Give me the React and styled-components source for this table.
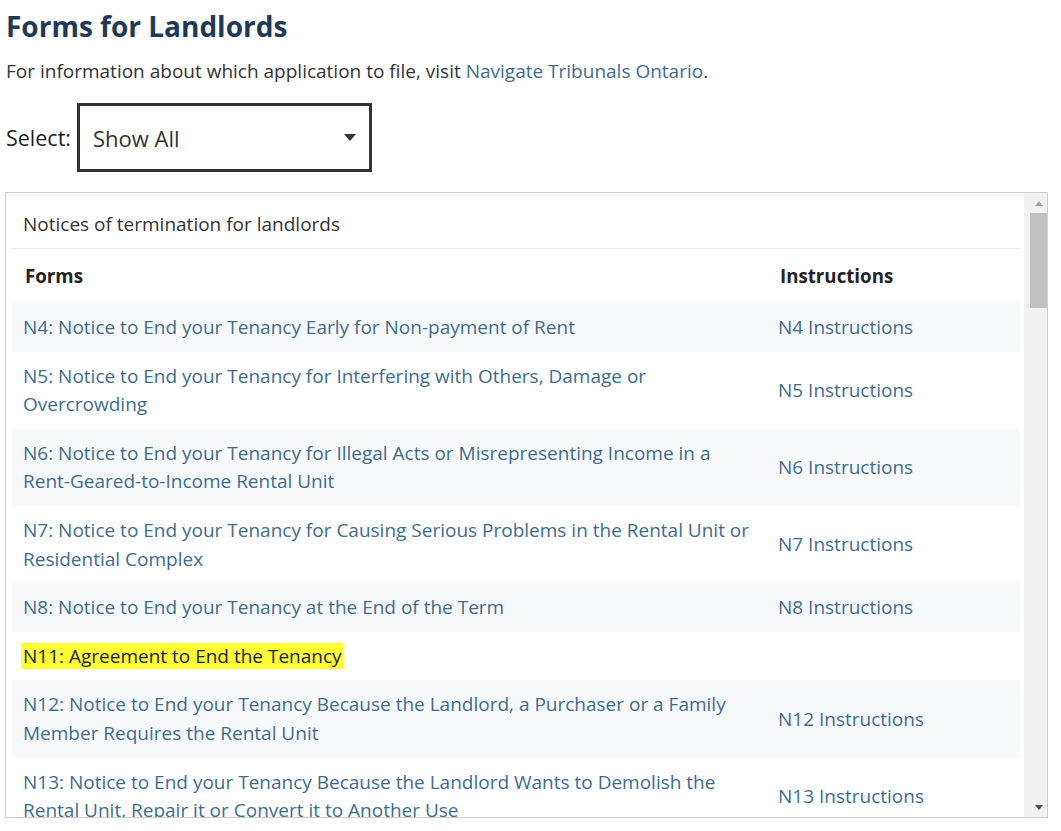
import React from 'react';
import styled, { createGlobalStyle } from 'styled-components';

const GlobalStyle = createGlobalStyle`
    html, body {
        margin: 0;
        padding: 0;
        background: #ffffff;
    }
    body {
        font-family: "Open Sans", "Noto Sans", Arial, sans-serif;
        color: #333333;
    }
`;

const forms = [
    { title: 'N4: Notice to End your Tenancy Early for Non-payment of Rent', instructions: 'N4 Instructions' },
    { title: 'N5: Notice to End your Tenancy for Interfering with Others, Damage or Overcrowding', instructions: 'N5 Instructions' },
    { title: 'N6: Notice to End your Tenancy for Illegal Acts or Misrepresenting Income in a Rent-Geared-to-Income Rental Unit', instructions: 'N6 Instructions' },
    { title: 'N7: Notice to End your Tenancy for Causing Serious Problems in the Rental Unit or Residential Complex', instructions: 'N7 Instructions' },
    { title: 'N8: Notice to End your Tenancy at the End of the Term', instructions: 'N8 Instructions' },
    { title: 'N11: Agreement to End the Tenancy', highlighted: true },
    { title: 'N12: Notice to End your Tenancy Because the Landlord, a Purchaser or a Family Member Requires the Rental Unit', instructions: 'N12 Instructions' },
    { title: 'N13: Notice to End your Tenancy Because the Landlord Wants to Demolish the Rental Unit, Repair it or Convert it to Another Use', instructions: 'N13 Instructions' },
];

const App = () => {
    return (
        <>
            <GlobalStyle />
            <Page>
                <Title>Forms for Landlords</Title>
                <Intro>
                    For information about which application to file, visit <Link href="#">Navigate Tribunals Ontario</Link>.
                </Intro>
                <SelectRow>
                    <Label>Select:</Label>
                    <SelectBox>
                        <span>Show All</span>
                        <Caret />
                    </SelectBox>
                </SelectRow>
                <Frame>
                    <Scroller>
                        <Caption>Notices of termination for landlords</Caption>
                        <Table>
                            <colgroup>
                                <col style={{ width: '755px' }} />
                                <col />
                            </colgroup>
                            <thead>
                                <tr>
                                    <Th>Forms</Th>
                                    <Th>Instructions</Th>
                                </tr>
                            </thead>
                            <tbody>
                                {forms.map((form) => (
                                    <Row key={form.title}>
                                        <Td>
                                            {form.highlighted
                                                ? <Mark>{form.title}</Mark>
                                                : <Link href="#">{form.title}</Link>}
                                        </Td>
                                        <Td>
                                            {form.instructions && <Link href="#">{form.instructions}</Link>}
                                        </Td>
                                    </Row>
                                ))}
                            </tbody>
                        </Table>
                    </Scroller>
                    <Scrollbar>
                        <ArrowButton>
                            <Arrow $dir="up" />
                        </ArrowButton>
                        <Track>
                            <Thumb />
                        </Track>
                        <ArrowButton>
                            <Arrow $dir="down" />
                        </ArrowButton>
                    </Scrollbar>
                </Frame>
            </Page>
        </>
    );
};

const Page = styled.div`
    padding: 0 13px 0 5px;
`;

const Title = styled.h1`
    margin: 0;
    padding: 7px 0 0 1px;
    font-size: 28px;
    line-height: 38px;
    font-weight: 700;
    color: #1d3b58;
`;

const Intro = styled.p`
    margin: 13px 0 0 1px;
    font-size: 19px;
    line-height: 26px;
    color: #333333;
`;

const Link = styled.a`
    color: #3d6d8e;
    text-decoration: none;
`;

const SelectRow = styled.div`
    display: flex;
    align-items: center;
    gap: 6px;
    margin-top: 19px;
`;

const Label = styled.span`
    padding-left: 1px;
    font-size: 21.5px;
    font-weight: 500;
    color: #1e1e1e;
`;

const SelectBox = styled.div`
    box-sizing: border-box;
    width: 295px;
    height: 69px;
    border: 3px solid #333333;
    display: flex;
    align-items: center;
    justify-content: space-between;
    padding: 0 13px 0 13px;
    font-size: 22px;
    color: #333333;
`;

const Caret = styled.span`
    width: 0;
    height: 0;
    border-left: 6.5px solid transparent;
    border-right: 6.5px solid transparent;
    border-top: 7px solid #333333;
`;

const Frame = styled.div`
    box-sizing: border-box;
    display: flex;
    width: 1043px;
    height: 626px;
    margin-top: 20px;
    border: 1px solid #cccccc;
`;

const Scroller = styled.div`
    flex: 1;
    overflow: hidden;
    padding: 0 5px 0 6px;
`;

const Caption = styled.div`
    padding: 17px 11px 10px;
    font-size: 19px;
    line-height: 28px;
    color: #333333;
    border-bottom: 1px solid #e9ecef;
`;

const Table = styled.table`
    width: 100%;
    table-layout: fixed;
    border-collapse: collapse;
    font-size: 19px;
    line-height: 28.6px;
`;

const Th = styled.th`
    padding: 13px 11px 13px 13px;
    line-height: 28px;
    text-align: left;
    font-size: 18.7px;
    font-weight: 700;
    color: #222222;
`;

const Row = styled.tr`
    &:nth-child(odd) {
        background: #f8f9fa;
    }
`;

const Td = styled.td`
    padding: 10px 11px;
    vertical-align: middle;
`;

const Mark = styled.span`
    background: #ffff33;
    color: #1a1a1a;
    margin-left: -2px;
    padding: 0 1px 0 2px;
`;

const Scrollbar = styled.div`
    display: flex;
    flex-direction: column;
    width: 23px;
    background: #f1f1f1;
`;

const ArrowButton = styled.div`
    display: flex;
    align-items: center;
    justify-content: center;
    height: 20px;
    padding-left: 6px;
`;

const Arrow = styled.span`
    width: 0;
    height: 0;
    border-left: 4.5px solid transparent;
    border-right: 4.5px solid transparent;
    ${({ $dir }) => ($dir === 'up'
        ? 'border-bottom: 5px solid #a3a3a3;'
        : 'border-top: 5px solid #505050;')}
`;

const Track = styled.div`
    flex: 1;
    display: flex;
    justify-content: flex-end;
`;

const Thumb = styled.div`
    width: 17px;
    height: 95px;
    background: #c1c1c1;
`;

export default App;
